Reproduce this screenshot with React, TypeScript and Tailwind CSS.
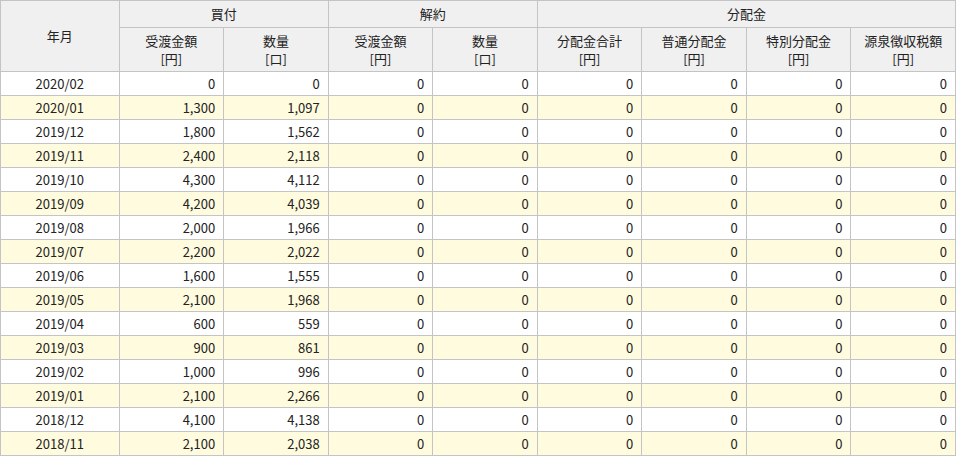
const rows: [string, string, string][] = [
  ["2020/02", "0", "0"],
  ["2020/01", "1,300", "1,097"],
  ["2019/12", "1,800", "1,562"],
  ["2019/11", "2,400", "2,118"],
  ["2019/10", "4,300", "4,112"],
  ["2019/09", "4,200", "4,039"],
  ["2019/08", "2,000", "1,966"],
  ["2019/07", "2,200", "2,022"],
  ["2019/06", "1,600", "1,555"],
  ["2019/05", "2,100", "1,968"],
  ["2019/04", "600", "559"],
  ["2019/03", "900", "861"],
  ["2019/02", "1,000", "996"],
  ["2019/01", "2,100", "2,266"],
  ["2018/12", "4,100", "4,138"],
  ["2018/11", "2,100", "2,038"],
];

const sub: [string, string][] = [
  ["受渡金額", "[円]"],
  ["数量", "[口]"],
  ["受渡金額", "[円]"],
  ["数量", "[口]"],
  ["分配金合計", "[円]"],
  ["普通分配金", "[円]"],
  ["特別分配金", "[円]"],
  ["源泉徴収税額", "[円]"],
];

const th = "border border-[#c4c4c4] bg-[#f0f0f0] font-normal text-center";
const td = "border border-[#c4c4c4] h-[24px] pr-[8px] text-right";

export default function App() {
  return (
    <div className="bg-white" style={{ fontFamily: '"Noto Sans CJK JP", "Liberation Sans", sans-serif' }}>
      <table className="border-collapse text-[13px] text-[#222] leading-[18px] w-[956px] table-fixed">
        <colgroup>
          <col className="w-[118px]" />
          {sub.map((_, i) => (
            <col key={i} className="w-[104px]" />
          ))}
        </colgroup>
        <thead>
          <tr className="h-[27px]">
            <th rowSpan={2} className={th}>年月</th>
            <th colSpan={2} className={th}>買付</th>
            <th colSpan={2} className={th}>解約</th>
            <th colSpan={4} className={th}>分配金</th>
          </tr>
          <tr className="h-[44px]">
            {sub.map(([a, b], i) => (
              <th key={i} className={th}>
                <div>{a}</div>
                <div>{b}</div>
              </th>
            ))}
          </tr>
        </thead>
        <tbody>
          {rows.map(([m, a, q], i) => (
            <tr key={m} className={i % 2 === 1 ? "bg-[#fffbde]" : "bg-white"}>
              <td className="border border-[#c4c4c4] h-[24px] text-center">{m}</td>
              <td className={td}>{a}</td>
              <td className={td}>{q}</td>
              {Array.from({ length: 6 }).map((_, j) => (
                <td key={j} className={td}>0</td>
              ))}
            </tr>
          ))}
        </tbody>
      </table>
    </div>
  );
}
